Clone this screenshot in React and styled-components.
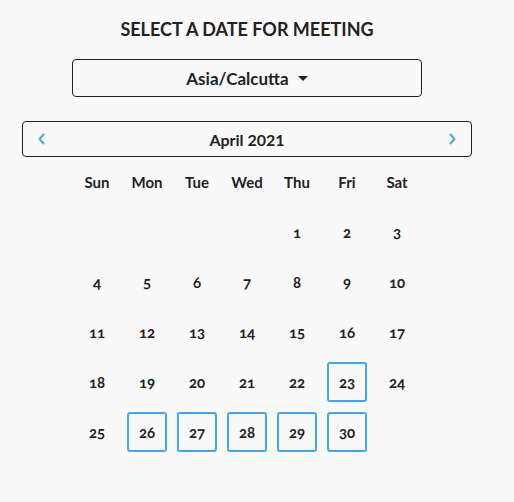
import { styled, createGlobalStyle } from "styled-components";

const GlobalStyle = createGlobalStyle`
    body {
        margin: 0;
        background-color: #f9f9f9;
        font-family: "Lato", "Open Sans", sans-serif;
        color: #222;
    }
`;

const Page = styled.div`
    width: 450px;
    margin-left: 22px;
    padding-top: 18px;

    display: flex;
    flex-direction: column;
    align-items: center;
`;

const Title = styled.div`
    font-size: 18px;
    font-weight: 700;
    line-height: 22px;
    text-align: center;
`;

const ZoneSelect = styled.div`
    width: 350px;
    height: 38px;
    margin-top: 19px;
    box-sizing: border-box;

    border: 1px solid #222;
    border-radius: 4px;

    display: flex;
    align-items: center;
    justify-content: center;
    gap: 9px;

    font-size: 17px;
    font-weight: 700;
`;

const Caret = styled.span`
    width: 0;
    height: 0;
    border-left: 5px solid transparent;
    border-right: 5px solid transparent;
    border-top: 5px solid #222;
`;

const MonthBar = styled.div`
    width: 450px;
    height: 36px;
    margin-top: 24px;
    box-sizing: border-box;
    padding: 0 14px;

    border: 1px solid #222;
    border-radius: 4px;

    display: flex;
    align-items: center;
    justify-content: space-between;

    font-size: 16px;
    font-weight: 700;
`;

const Arrow = styled.svg`
    width: 10px;
    height: 14px;
    display: block;
`;

const Grid = styled.div`
    display: grid;
    grid-template-columns: repeat(7, 50px);
    grid-auto-rows: 50px;
`;

const DayName = styled.div`
    display: flex;
    align-items: center;
    justify-content: center;
    font-size: 15px;
    font-weight: 700;
`;

const DayCell = styled.div`
    display: flex;
    align-items: center;
    justify-content: center;
`;

const DayNum = styled.div`
    width: 40px;
    height: 40px;
    box-sizing: border-box;
    border: 2px solid ${(props) => props.$available ? "#42a5f5" : "transparent"};
    border-radius: 3px;

    display: flex;
    align-items: center;
    justify-content: center;

    font-size: 15px;
    font-weight: 700;
    font-variant-numeric: oldstyle-nums;
`;

const ChevronLeft = () => (
    <Arrow viewBox="0 0 10 14">
        <path d="M7 2 L2.5 7 L7 12" fill="none" stroke="#42a5f5" strokeWidth="2" />
    </Arrow>
);

const ChevronRight = () => (
    <Arrow viewBox="0 0 10 14">
        <path d="M3 2 L7.5 7 L3 12" fill="none" stroke="#42a5f5" strokeWidth="2" />
    </Arrow>
);

const weekDays = ["Sun", "Mon", "Tue", "Wed", "Thu", "Fri", "Sat"];
const available = [23, 26, 27, 28, 29, 30];

export default function App() {
    const cells = [];
    for (let i = 0; i < 4; i++) cells.push(null);
    for (let d = 1; d <= 30; d++) cells.push(d);

    return <>
        <GlobalStyle />
        <Page>
            <Title>SELECT A DATE FOR MEETING</Title>
            <ZoneSelect>
                Asia/Calcutta
                <Caret />
            </ZoneSelect>
            <MonthBar>
                <ChevronLeft />
                April 2021
                <ChevronRight />
            </MonthBar>
            <Grid>
                {weekDays.map((day) => <DayName key={day}>{day}</DayName>)}
                {cells.map((d, index) => {
                    return <DayCell key={index}>
                        {d && <DayNum $available={available.includes(d)}>{d}</DayNum>}
                    </DayCell>
                })}
            </Grid>
        </Page>
    </>;
}
